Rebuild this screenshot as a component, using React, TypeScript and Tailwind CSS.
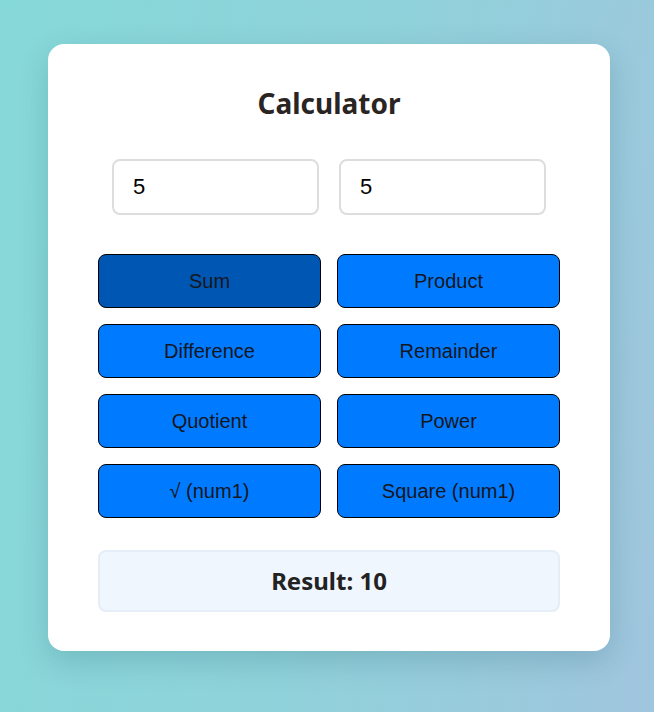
import React, { useState } from "react";

export default function App() {
  const [a, setA] = useState("5");
  const [b, setB] = useState("5");
  const [active, setActive] = useState("Sum");
  const [result, setResult] = useState<string>("10");

  const ops: { label: string; fn: (x: number, y: number) => number }[] = [
    { label: "Sum", fn: (x, y) => x + y },
    { label: "Product", fn: (x, y) => x * y },
    { label: "Difference", fn: (x, y) => x - y },
    { label: "Remainder", fn: (x, y) => x % y },
    { label: "Quotient", fn: (x, y) => x / y },
    { label: "Power", fn: (x, y) => Math.pow(x, y) },
    { label: "√ (num1)", fn: (x) => Math.sqrt(x) },
    { label: "Square (num1)", fn: (x) => x * x },
  ];

  return (
    <div className="min-h-[712px] w-full bg-[linear-gradient(100deg,#86d9d9_0%,#8fd2da_50%,#a0c5de_100%)] pt-[44px] pl-[48px]">
      <div className="w-[562px] rounded-[16px] bg-white px-[50px] pt-[40px] pb-[39px] shadow-[0_10px_30px_rgba(0,60,80,0.18)]">
        <h1 className="text-center text-[28px] leading-[38px] font-bold text-[#2a2422] [font-family:'Noto_Sans',sans-serif]">
          Calculator
        </h1>
        <div className="mt-[37px] flex justify-center gap-[20px]">
          <input
            value={a}
            onChange={(e) => setA(e.target.value)}
            className="h-[56px] w-[207px] rounded-[8px] border-2 border-[#dddddd] px-[19px] text-[22px] text-black outline-none [font-family:'Liberation_Sans',Arial,sans-serif]"
          />
          <input
            value={b}
            onChange={(e) => setB(e.target.value)}
            className="h-[56px] w-[207px] rounded-[8px] border-2 border-[#dddddd] px-[19px] text-[22px] text-black outline-none [font-family:'Liberation_Sans',Arial,sans-serif]"
          />
        </div>
        <div className="mt-[39px] grid grid-cols-2 gap-x-[16px] gap-y-[16px]">
          {ops.map((op) => (
            <button
              key={op.label}
              onClick={() => {
                setActive(op.label);
                setResult(String(op.fn(parseFloat(a), parseFloat(b))));
              }}
              className={`h-[54px] rounded-[8px] border border-black text-[20px] text-[#16161e] [font-family:'Liberation_Sans',Arial,sans-serif] ${
                active === op.label ? "bg-[#0056b3]" : "bg-[#007bff]"
              }`}
            >
              {op.label}
            </button>
          ))}
        </div>
        <div className="mt-[32px] flex h-[62px] items-center justify-center rounded-[8px] border-2 border-[#e5eef8] bg-[#eff6fe]">
          <span className="text-[24px] font-bold text-[#222] [font-family:'Noto_Sans',sans-serif]">
            Result: {result}
          </span>
        </div>
      </div>
    </div>
  );
}
